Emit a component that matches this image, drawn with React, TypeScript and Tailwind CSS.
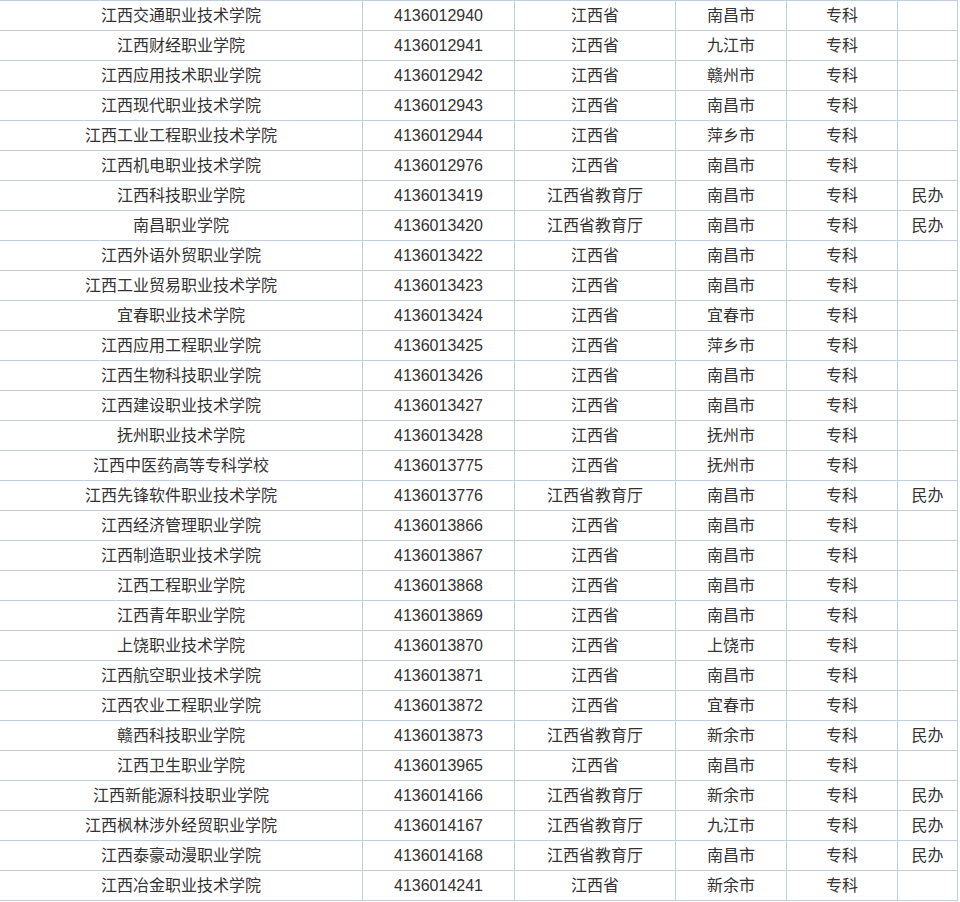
import React from "react";

const rows: [string, string, string, string, string, string][] = [
  ["江西交通职业技术学院", "4136012940", "江西省", "南昌市", "专科", ""],
  ["江西财经职业学院", "4136012941", "江西省", "九江市", "专科", ""],
  ["江西应用技术职业学院", "4136012942", "江西省", "赣州市", "专科", ""],
  ["江西现代职业技术学院", "4136012943", "江西省", "南昌市", "专科", ""],
  ["江西工业工程职业技术学院", "4136012944", "江西省", "萍乡市", "专科", ""],
  ["江西机电职业技术学院", "4136012976", "江西省", "南昌市", "专科", ""],
  ["江西科技职业学院", "4136013419", "江西省教育厅", "南昌市", "专科", "民办"],
  ["南昌职业学院", "4136013420", "江西省教育厅", "南昌市", "专科", "民办"],
  ["江西外语外贸职业学院", "4136013422", "江西省", "南昌市", "专科", ""],
  ["江西工业贸易职业技术学院", "4136013423", "江西省", "南昌市", "专科", ""],
  ["宜春职业技术学院", "4136013424", "江西省", "宜春市", "专科", ""],
  ["江西应用工程职业学院", "4136013425", "江西省", "萍乡市", "专科", ""],
  ["江西生物科技职业学院", "4136013426", "江西省", "南昌市", "专科", ""],
  ["江西建设职业技术学院", "4136013427", "江西省", "南昌市", "专科", ""],
  ["抚州职业技术学院", "4136013428", "江西省", "抚州市", "专科", ""],
  ["江西中医药高等专科学校", "4136013775", "江西省", "抚州市", "专科", ""],
  ["江西先锋软件职业技术学院", "4136013776", "江西省教育厅", "南昌市", "专科", "民办"],
  ["江西经济管理职业学院", "4136013866", "江西省", "南昌市", "专科", ""],
  ["江西制造职业技术学院", "4136013867", "江西省", "南昌市", "专科", ""],
  ["江西工程职业学院", "4136013868", "江西省", "南昌市", "专科", ""],
  ["江西青年职业学院", "4136013869", "江西省", "南昌市", "专科", ""],
  ["上饶职业技术学院", "4136013870", "江西省", "上饶市", "专科", ""],
  ["江西航空职业技术学院", "4136013871", "江西省", "南昌市", "专科", ""],
  ["江西农业工程职业学院", "4136013872", "江西省", "宜春市", "专科", ""],
  ["赣西科技职业学院", "4136013873", "江西省教育厅", "新余市", "专科", "民办"],
  ["江西卫生职业学院", "4136013965", "江西省", "南昌市", "专科", ""],
  ["江西新能源科技职业学院", "4136014166", "江西省教育厅", "新余市", "专科", "民办"],
  ["江西枫林涉外经贸职业学院", "4136014167", "江西省教育厅", "九江市", "专科", "民办"],
  ["江西泰豪动漫职业学院", "4136014168", "江西省教育厅", "南昌市", "专科", "民办"],
  ["江西冶金职业技术学院", "4136014241", "江西省", "新余市", "专科", ""],
];

const cell =
  "flex items-center justify-center border-r border-[#c3cedd] whitespace-nowrap overflow-hidden";

export default function App() {
  return (
    <div
      className="bg-white text-[#333333] text-[16px] w-[960px] leading-none"
      style={{ fontFamily: '"Liberation Sans", Arial, "Noto Sans CJK SC", sans-serif' }}
    >
      <div className="w-[958px] border-t border-[#c3cedd]">
        {rows.map((r, i) => (
          <div key={i} className="flex h-[30px] border-b border-[#c3cedd]">
            <div className={`${cell} w-[363px]`}>{r[0]}</div>
            <div className={`${cell} w-[152px]`}>{r[1]}</div>
            <div className={`${cell} w-[161px]`}>{r[2]}</div>
            <div className={`${cell} w-[111px]`}>{r[3]}</div>
            <div className={`${cell} w-[111px]`}>{r[4]}</div>
            <div className={`${cell} w-[60px]`}>{r[5]}</div>
          </div>
        ))}
      </div>
    </div>
  );
}
